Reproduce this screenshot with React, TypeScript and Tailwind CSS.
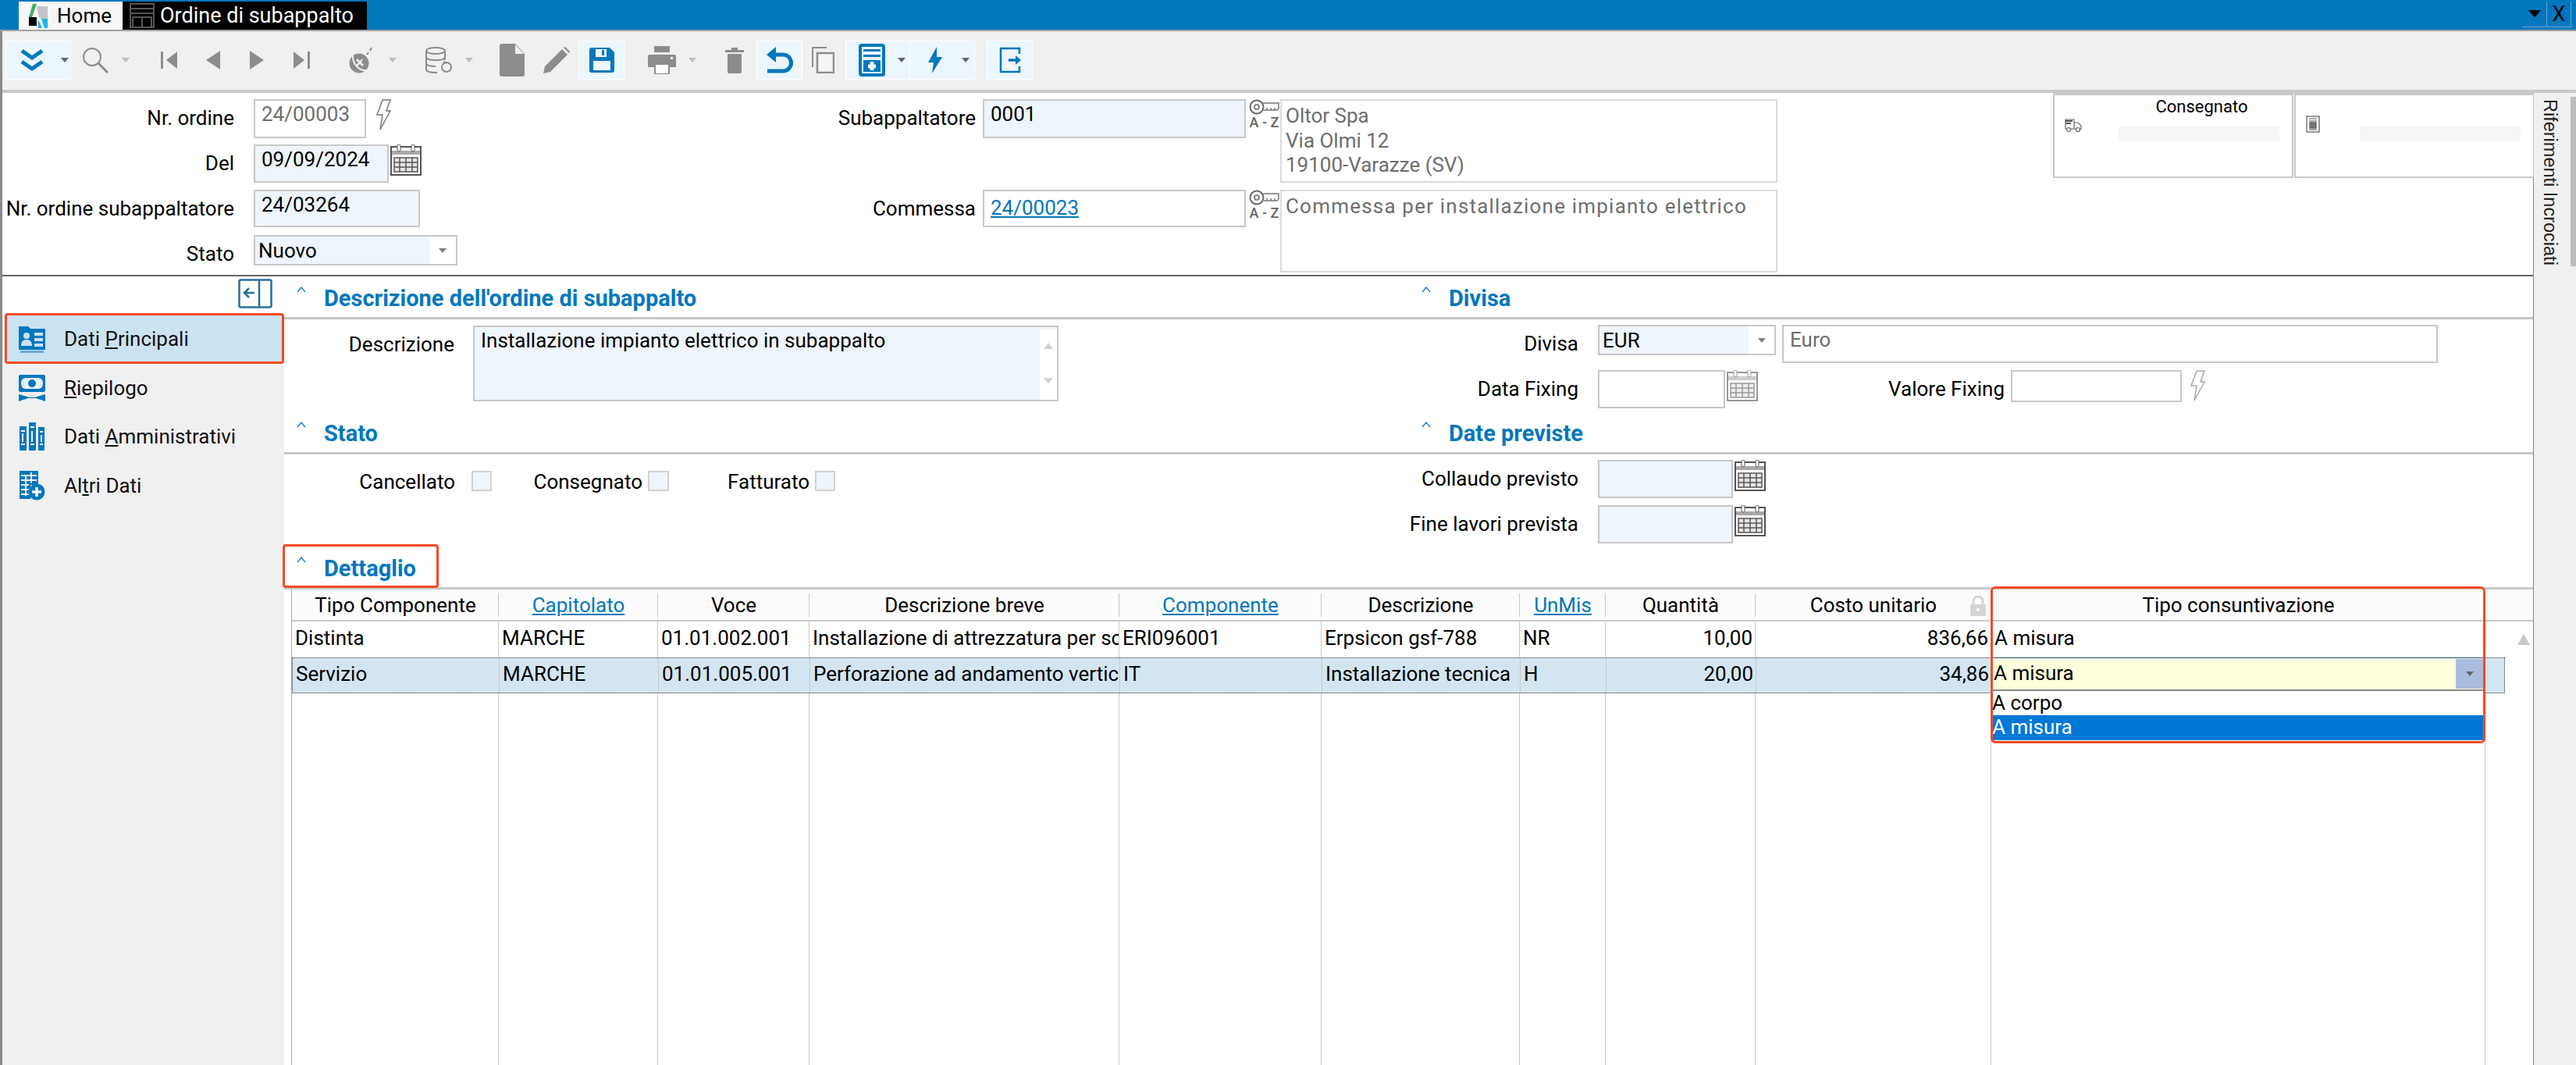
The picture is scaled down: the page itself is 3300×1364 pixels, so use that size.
import React from "react";

const BLUE = "#0277bd";
const GR = "#8c8c8c";

function Tri({ c = "#7f7f7f", s = 10 }: { c?: string; s?: number }) {
  return (
    <svg width={s} height={s * 0.6} viewBox="0 0 10 6" className="shrink-0">
      <path d="M0 0h10L5 6z" fill={c} />
    </svg>
  );
}

function Calendar({ faded = false }: { faded?: boolean }) {
  return (
    <svg width="40" height="40" viewBox="0 0 40 40" className={faded ? "shrink-0 opacity-60" : "shrink-0"}>
      <rect x="1" y="3" width="38" height="36" fill="#fff" stroke="#555" strokeWidth="2" />
      <rect x="2" y="8" width="36" height="5" fill="#a8a8a8" />
      <rect x="9" y="0" width="4" height="9" rx="2" fill="#fff" stroke="#555" />
      <rect x="27" y="0" width="4" height="9" rx="2" fill="#fff" stroke="#555" />
      <rect x="5" y="17" width="30" height="18" fill="#e4e4e4" stroke="#555" strokeWidth="1.5" />
      <path d="M12 17v18M20 17v18M28 17v18M5 23h30M5 29h30" stroke="#555" strokeWidth="1.5" />
    </svg>
  );
}

function KeyAZ() {
  return (
    <div className="w-[41px] shrink-0 flex flex-col items-center">
      <svg width="40" height="20" viewBox="0 0 40 20">
        <circle cx="10" cy="10" r="8.5" fill="none" stroke="#666" strokeWidth="2" />
        <circle cx="10" cy="10" r="3" fill="none" stroke="#666" strokeWidth="1.5" />
        <path d="M18 5h20v7l-2 2H19M23 14v-3M28 14v-3M33 14v-3" fill="none" stroke="#777" strokeWidth="1.5" />
      </svg>
      <div className="text-[18px] leading-[20px] font-medium text-[#666] whitespace-pre">A - Z</div>
    </div>
  );
}

function Bolt({ faded = false }: { faded?: boolean }) {
  return (
    <svg width="20" height="40" viewBox="0 0 20 40" className="shrink-0">
      <path d="M9 1h10l-5 14h5L6 39l3-19H2z" fill="#fff" stroke={faded ? "#aaa" : "#777"} strokeWidth="1.5" />
    </svg>
  );
}

function Chevron() {
  return (
    <svg width="12" height="8" viewBox="0 0 12 8" className="shrink-0 mb-[18px]">
      <path d="M1 7l5-6 5 6" fill="none" stroke={BLUE} strokeWidth="1.2" />
    </svg>
  );
}

function SectionHead({ title, left, h = "h-[55px]" }: { title: string; left: string; h?: string }) {
  return (
    <div className={`${h} shrink-0 flex items-center border-b-[3px] border-[#c8c8c8] ${left}`}>
      <Chevron />
      <span className="ml-[23px] pt-[4px] text-[29px] leading-[32px] font-bold text-[#0277bd]">{title}</span>
    </div>
  );
}

function Label({ w, children }: { w: string; children: React.ReactNode }) {
  return <div className={`${w} shrink-0 text-right pt-[10px] text-[26px] leading-[28px] text-black whitespace-nowrap`}>{children}</div>;
}

function Input({ w, h, fill = false, gray = false, link = false, children }: { w: string; h: string; fill?: boolean; gray?: boolean; link?: boolean; children?: React.ReactNode }) {
  return (
    <div
      className={`${w} ${h} shrink-0 border-2 border-[#c8c8c8] pl-[8px] text-[26px] leading-[28px] whitespace-nowrap ${link ? "pt-[7px]" : "pt-[3px]"} ${fill ? "bg-[#eef5fc]" : "bg-white"} ${gray ? "text-[#6e6e6e]" : link ? "text-[#0277bd] underline" : "text-black"}`}
    >
      {children}
    </div>
  );
}

function Select({ w, fillW, children }: { w: string; fillW: string; children: React.ReactNode }) {
  return (
    <div className={`${w} h-[39px] shrink-0 border-2 border-[#c8c8c8] bg-white flex items-center`}>
      <div className={`${fillW} h-full bg-[#eef5fc] pl-[4px] text-[26px] leading-[28px] flex items-center`}>{children}</div>
      <div className="flex-1 flex justify-center"><Tri /></div>
    </div>
  );
}

function Tool({ w, ml, active = false, children, cls = "justify-center" }: { w: string; ml: string; active?: boolean; children: React.ReactNode; cls?: string }) {
  return (
    <div className={`${w} ${ml} h-[48px] shrink-0 flex items-center ${cls} ${active ? "bg-[#ebf6fd] outline outline-1 outline-white" : ""}`}>
      {children}
    </div>
  );
}

function Toolbar() {
  return (
    <div className="h-[79px] shrink-0 bg-[#f0f0f0] border-b-[4px] border-[#c8c8c8] flex items-center pb-[1px]">
      <Tool w="w-[82px]" ml="ml-[5px]" active cls="pl-[17px] gap-[21px]">
        <svg width="32" height="30" viewBox="0 0 32 30"><path d="M3 3l13 9 13-9M3 17l13 9 13-9" fill="none" stroke={BLUE} strokeWidth="5" /></svg>
        <Tri c="#666" />
      </Tool>
      <Tool w="w-[72px]" ml="ml-[10px]" cls="pl-[5px] gap-[17px]">
        <svg width="34" height="34" viewBox="0 0 34 34"><circle cx="13" cy="13" r="11" fill="none" stroke={GR} strokeWidth="2" /><path d="M21 21l12 12" stroke={GR} strokeWidth="3" /></svg>
        <Tri c="#bdbdbd" />
      </Tool>
      <Tool w="w-[41px]" ml="ml-[23px]"><svg width="22" height="24" viewBox="0 0 22 24"><path d="M1 1h3v22H1zM22 1v22L8 12z" fill={GR} /></svg></Tool>
      <Tool w="w-[40px]" ml="ml-[17px]"><svg width="18" height="24" viewBox="0 0 18 24"><path d="M18 0v24L0 12z" fill={GR} /></svg></Tool>
      <Tool w="w-[40px]" ml="ml-[16px]"><svg width="18" height="24" viewBox="0 0 18 24"><path d="M0 0v24l18-12z" fill={GR} /></svg></Tool>
      <Tool w="w-[40px]" ml="ml-[18px]"><svg width="22" height="24" viewBox="0 0 22 24"><path d="M18 1h3v22h-3zM0 1v22l14-11z" fill={GR} /></svg></Tool>
      <Tool w="w-[75px]" ml="ml-[33px]" cls="pl-[7px] gap-[17px]">
        <svg width="34" height="34" viewBox="0 0 34 34"><circle cx="13" cy="21" r="12.500" fill={GR} /><path d="M5 10c-1 10 7 22 19 20" fill="none" stroke="#f0f0f0" strokeWidth="2" /><path d="M10 16l8 8M18 16l-8 8" stroke="#f0f0f0" strokeWidth="2.500" /><path d="M17 19l4-6M23 10l2-3M27 5l2-4" stroke={GR} strokeWidth="2" /></svg>
        <Tri c="#bdbdbd" />
      </Tool>
      <Tool w="w-[74px]" ml="ml-[23px]" cls="pl-[6px] gap-[16px]">
        <svg width="36" height="36" viewBox="0 0 36 36" fill="none" stroke={GR} strokeWidth="2"><ellipse cx="14" cy="6" rx="12" ry="4" /><path d="M2 6v24c0 3 6 4 14 4M26 6v12M2 14c0 3 6 4 12 4s12-1 12-4M2 22c0 3 6 4 12 4" /><circle cx="28" cy="27" r="6" /><path d="M24 20l4 2" /></svg>
        <Tri c="#bdbdbd" />
      </Tool>
      <Tool w="w-[42px]" ml="ml-[23px]"><svg width="32" height="42" viewBox="0 0 32 42"><path d="M3 0h17l12 13v26a3 3 0 0 1-3 3H3a3 3 0 0 1-3-3V3a3 3 0 0 1 3-3z" fill={GR} /><path d="M20 1v12h11" fill="#f0f0f0" /></svg></Tool>
      <Tool w="w-[42px]" ml="ml-[15px]"><svg width="34" height="34" viewBox="0 0 34 34"><path d="M0 34l2-9L24 3l7 7L9 32z" fill={GR} /><path d="M26 1l2-1 6 6-1 2z" fill={GR} /></svg></Tool>
      <Tool w="w-[57px]" ml="ml-[8px]" active>
        <svg width="32" height="32" viewBox="0 0 32 32"><path d="M3 0h23l6 6v23a3 3 0 0 1-3 3H3a3 3 0 0 1-3-3V3a3 3 0 0 1 3-3z" fill={BLUE} /><rect x="8" y="2" width="14" height="10" fill="#ebf6fd" /><rect x="16" y="3" width="3" height="7" fill={BLUE} /><rect x="5" y="17" width="22" height="12" fill="#ebf6fd" /></svg>
      </Tool>
      <Tool w="w-[73px]" ml="ml-[23px]" cls="pl-[8px] gap-[16px]">
        <svg width="36" height="36" viewBox="0 0 36 36"><rect x="8" y="0" width="20" height="8" fill={GR} /><path d="M2 11h32a2 2 0 0 1 2 2v14H28v-5H8v5H0V13a2 2 0 0 1 2-2z" fill={GR} /><rect x="9" y="23" width="18" height="13" fill="#fff" stroke={GR} strokeWidth="2" /><rect x="29" y="14" width="3" height="3" fill="#fff" /></svg>
        <Tri c="#bdbdbd" />
      </Tool>
      <Tool w="w-[41px]" ml="ml-[25px]"><svg width="24" height="34" viewBox="0 0 24 34"><path d="M0 4h24v3H0zM8 1h8v3H8z" fill={GR} /><path d="M3 9h18v23a2 2 0 0 1-2 2H5a2 2 0 0 1-2-2z" fill={GR} /></svg></Tool>
      <Tool w="w-[57px]" ml="ml-[9px]" active>
        <svg width="36" height="34" viewBox="0 0 36 34"><path d="M2 31h20a10.500 10.500 0 0 0 0-21H5" fill="none" stroke={BLUE} strokeWidth="5" /><path d="M13 0v20L1 10z" fill={BLUE} /></svg>
      </Tool>
      <Tool w="w-[42px]" ml="ml-[6px]"><svg width="30" height="34" viewBox="0 0 30 34" fill="none" stroke={GR} strokeWidth="2"><path d="M20 1H2v25" /><rect x="8" y="8" width="21" height="25" fill="#f5f5f5" strokeWidth="2.500" /></svg></Tool>
      <Tool w="w-[81px]" ml="ml-[9px]" active cls="pl-[16px] gap-[16px]">
        <svg width="34" height="42" viewBox="0 0 34 42"><rect width="34" height="42" rx="4" fill={BLUE} /><rect x="4" y="4" width="26" height="34" fill="#ebf6fd" /><rect x="6" y="7" width="22" height="3" fill={BLUE} /><rect x="6" y="14" width="22" height="3" fill={BLUE} /><rect x="6" y="21" width="22" height="15" fill={BLUE} /><path d="M17 23v11M12 29h10" stroke="#ebf6fd" strokeWidth="5" /></svg>
        <Tri c="#666" />
      </Tool>
      <Tool w="w-[82px]" ml="ml-[1px]" active cls="pl-[22px] gap-[24px]">
        <svg width="20" height="34" viewBox="0 0 20 34"><path d="M12 0L1 20h7l-2 14 13-21h-7z" fill={BLUE} /></svg>
        <Tri c="#666" />
      </Tool>
      <Tool w="w-[57px]" ml="ml-[17px]" active>
        <svg width="28" height="34" viewBox="0 0 28 34" fill="none" stroke={BLUE} strokeWidth="2.500"><path d="M26 9V2H2v30h24v-7" /><path d="M12 17h13" strokeWidth="3.500" /><path d="M21 11v12l7-6z" fill={BLUE} stroke="none" /></svg>
      </Tool>
    </div>
  );
}

function TitleBar() {
  return (
    <div className="h-[38px] shrink-0 bg-[#0277bd] flex items-end">
      <div className="ml-[24px] w-[133px] h-[36px] bg-[#f7f7f7] flex items-center pl-[13px] gap-[12px]">
        <svg width="24" height="31" viewBox="0 0 24 31">
          <path d="M0 17L5 0h5L4 17z" fill="#3fae63" />
          <path d="M10 3h14v16H14l-3-9z" fill="#c4c4c4" />
          <rect x="0" y="17" width="10" height="11" fill="#000" />
          <path d="M12 20l5 11h-5zM16 19h8v12h-4z" fill="#1fb3ea" />
        </svg>
        <span className="text-[26px] leading-[30px] text-black">Home</span>
      </div>
      <div className="w-[313px] h-[36px] bg-black flex items-center pl-[9px] gap-[7px]">
        <svg width="32" height="32" viewBox="0 0 32 32" fill="none" stroke="#555" strokeWidth="2"><rect x="1" y="1" width="30" height="30" /><path d="M1 7h30M1 13h30M4 18h24v13M4 18v13M16 18v13" /></svg>
        <span className="text-[27px] leading-[30px] text-white whitespace-nowrap">Ordine di subappalto</span>
      </div>
      <div className="flex-1" />
      <div className="h-[33px] mb-[3px] mr-[6px] flex border-b border-[#5fa8d6]">
        <div className="w-[32px] flex items-center justify-center border-r border-[#5fa8d6]"><Tri c="#000" s={16} /></div>
        <div className="w-[31px] flex items-center justify-center text-[27px] leading-none text-black border-r border-[#5fa8d6]">X</div>
      </div>
    </div>
  );
}

function Card({ label, ml, icon }: { label?: string; ml: string; icon: React.ReactNode }) {
  return (
    <div className={`w-[308px] h-[109px] ${ml} shrink-0 border-2 border-[#c8c8c8] border-t-[3px] flex flex-col`}>
      <div className="h-[32px] pl-[73px] pb-[2px] flex items-center justify-center text-[22px] leading-[24px] text-black">{label}</div>
      <div className="flex items-start">
        <div className="w-[82px] pl-[13px] -mt-[2px] h-[30px]">{icon}</div>
        <div className="w-[206px] h-[19px] mt-[8px] bg-[#f6f6f6]" />
      </div>
    </div>
  );
}

function Header() {
  return (
    <div className="h-[235px] shrink-0 border-b-2 border-[#666] flex">
      <div className="w-[1000px] shrink-0 flex flex-col pt-[8px]">
        <div className="flex h-[58px] items-start">
          <Label w="w-[297px]">Nr. ordine</Label>
          <div className="ml-[25px]"><Input w="w-[144px]" h="h-[50px]" gray>24/00003</Input></div>
          <div className="ml-[12px]"><Bolt /></div>
        </div>
        <div className="flex h-[58px] items-start">
          <Label w="w-[297px]">Del</Label>
          <div className="ml-[25px]"><Input w="w-[173px]" h="h-[49px]" fill>09/09/2024</Input></div>
          <div className="ml-[2px]"><Calendar /></div>
        </div>
        <div className="flex h-[58px] items-start">
          <Label w="w-[297px]">Nr. ordine subappaltatore</Label>
          <div className="ml-[25px]"><Input w="w-[213px]" h="h-[48px]" fill>24/03264</Input></div>
        </div>
        <div className="flex items-start">
          <Label w="w-[297px]">Stato</Label>
          <div className="ml-[25px]"><Select w="w-[261px]" fillW="w-[223px]">Nuovo</Select></div>
        </div>
      </div>
      <div className="w-[1275px] shrink-0 flex flex-col pt-[8px]">
        <div className="flex h-[116px] items-start">
          <Label w="w-[247px]">Subappaltatore</Label>
          <div className="ml-[9px]"><Input w="w-[337px]" h="h-[50px]" fill>0001</Input></div>
          <div className="ml-[3px]"><KeyAZ /></div>
          <div className="w-[637px] h-[107px] border-2 border-[#dcdcdc] pl-[5px] pt-[4px] text-[26px] leading-[31.500px] text-[#6e6e6e]">
            <div>Oltor Spa</div>
            <div>Via Olmi 12</div>
            <div>19100-Varazze (SV)</div>
          </div>
        </div>
        <div className="flex items-start">
          <Label w="w-[247px]">Commessa</Label>
          <div className="ml-[9px]"><Input w="w-[337px]" h="h-[48px]" link>24/00023</Input></div>
          <div className="ml-[3px]"><KeyAZ /></div>
          <div className="w-[637px] h-[106px] border-2 border-[#dcdcdc] pl-[5px] pt-[4px] text-[26px] leading-[31.500px] tracking-[1.2px] text-[#6e6e6e]">Commessa per installazione impianto elettrico</div>
        </div>
      </div>
      <Card ml="ml-[352px]" label="Consegnato" icon={
        <svg width="22" height="18" viewBox="0 0 22 18" fill="none" stroke="#666" strokeWidth="1.2"><path d="M1 1h11v12H1zM12 5h5l4 4v4h-9" fill="#fff" /><path d="M1 3h9M1 6h7" stroke="#555" strokeWidth="2" /><circle cx="5" cy="14" r="2.500" fill="#fff" /><circle cx="17" cy="14" r="2.500" fill="#fff" /></svg>
      } />
      <Card ml="ml-[1px]" icon={
        <svg width="18" height="22" viewBox="0 0 18 22" fill="none" stroke="#555" strokeWidth="1.2" className="-mt-[4px]"><rect x="1" y="1" width="16" height="20" fill="#fff" /><path d="M4 4h10M4 7h10M4 18h10" /><rect x="5" y="9" width="8" height="7" fill="#777" /></svg>
      } />
    </div>
  );
}

const items = [
  { key: "a", active: true, text: <>Dati <u>P</u>rincipali</>, h: "h-[65px]", icon: (
    <svg width="34" height="36" viewBox="0 0 34 36"><path d="M0 2h12l3 3h19v27H0z" fill={BLUE} /><circle cx="10" cy="14" r="4" fill="#cbe2f0" /><path d="M3 27c0-6 3-8 7-8s7 2 7 8z" fill="#cbe2f0" /><path d="M20 10h11v4H20zM20 17h11v4H20zM20 24h11v4H20z" fill="#cbe2f0" /><rect x="2" y="33" width="30" height="3" fill={BLUE} opacity="0.5" /></svg>
  ) },
  { key: "b", text: <><u>R</u>iepilogo</>, h: "h-[62px]", icon: (
    <svg width="34" height="36" viewBox="0 0 34 36"><rect x="0" y="1" width="34" height="22" rx="2" fill={BLUE} /><rect x="3" y="5" width="28" height="14" rx="6" fill="#e8f2f8" /><circle cx="17" cy="12" r="5" fill={BLUE} /><path d="M0 26l14 4h6l14-4v9l-12-4H12L0 35z" fill={BLUE} /></svg>
  ) },
  { key: "c", text: <>Dati <u>A</u>mministrativi</>, h: "h-[62px]", icon: (
    <svg width="34" height="36" viewBox="0 0 34 36"><path d="M1 5h9v31H1zM13 0h9v36h-9zM25 6h8v30h-8z" fill={BLUE} /><path d="M3 11h5M3 28h5M15 6h5M15 28h5M27 12h4M27 28h4" stroke="#f0f0f0" strokeWidth="2" /><path d="M5 14v11M17 11v14M29 16v9" stroke="#f0f0f0" strokeWidth="2" /></svg>
  ) },
  { key: "d", text: <>Al<u>t</u>ri Dati</>, h: "h-[63px]", icon: (
    <svg width="34" height="38" viewBox="0 0 34 38"><path d="M1 0h24v18H15v18H1z" fill={BLUE} /><path d="M3 6h20M3 12h20M3 18h10M3 24h10M3 30h10M9 6v26M16 2v14" stroke="#f0f0f0" strokeWidth="2" /><circle cx="23" cy="27" r="10.500" fill={BLUE} /><path d="M23 21v12M17 27h12" stroke="#f0f0f0" strokeWidth="3.500" /></svg>
  ) },
];

function Sidebar() {
  return (
    <div className="w-[361px] shrink-0 flex flex-col">
      <div className="h-[47px] shrink-0 flex justify-end pr-[15px] pt-[3px]">
        <svg width="44" height="38" viewBox="0 0 44 38" fill="none" stroke="#2a6f9e" strokeWidth="2.500"><rect x="1.500" y="1.500" width="41" height="35" rx="2" /><path d="M27 2v34" /><path d="M8 18h13M14 12l-6 6 6 6" /></svg>
      </div>
      <div className="flex-1 bg-[#f0f0f0] flex flex-col">
        {items.map((it) => (
          <div
            key={it.key}
            className={`${it.h} shrink-0 flex items-center text-[26px] leading-[28px] text-[#111] ${it.active ? "ml-[3px] pl-[15px] bg-[#cbe2f0] border-[3px] border-[#f44a25] rounded-[4px]" : "pl-[21px]"}`}
          >
            <div className="w-[34px] mr-[24px] shrink-0 flex justify-center">{it.icon}</div>
            <span>{it.text}</span>
          </div>
        ))}
      </div>
    </div>
  );
}

const cols = "grid-cols-[265px_204px_194px_397px_259px_254px_110px_192px_302px_633px_61px]";

function HeaderCell({ link, children }: { link?: boolean; children?: React.ReactNode }) {
  return (
    <div className="relative h-full flex items-center justify-center text-[26px] leading-[28px] whitespace-nowrap">
      <span className={link ? "text-[#0277bd] underline" : "text-black"}>{children}</span>
    </div>
  );
}

function Cell({ right, last, children }: { right?: boolean; last?: boolean; children?: React.ReactNode }) {
  return (
    <div className={`h-full overflow-hidden whitespace-nowrap flex items-center pb-[4px] text-[26px] leading-[28px] text-black ${last ? "" : "border-r border-[#c8c8c8]"} ${right ? "justify-end pr-[3px]" : "pl-[4px]"}`}>
      {children}
    </div>
  );
}

function Table() {
  const headers: [string, boolean][] = [
    ["Tipo Componente", false], ["Capitolato", true], ["Voce", false], ["Descrizione breve", false], ["Componente", true],
    ["Descrizione", false], ["UnMis", true], ["Quantità", false], ["Costo unitario", false], ["Tipo consuntivazione", false],
  ];
  return (
    <div className="flex-1 ml-[9px] border-l border-[#aaa] flex flex-col relative min-h-0">
      <div className={`grid ${cols} h-[41px] shrink-0 bg-[#fcfcfc] border-b-2 border-[#c8c8c8]`}>
        {headers.map(([h, l], i) => (
          <div key={h} className="relative h-full">
            <HeaderCell link={l}>{h}</HeaderCell>
            <div className="absolute right-0 top-[5px] bottom-[4px] w-px bg-[#c8c8c8]" />
            {i === 8 && (
              <svg width="22" height="26" viewBox="0 0 22 26" className="absolute right-[6px] top-[8px]"><path d="M5 11V7a6 6 0 0 1 12 0v4" fill="none" stroke="#d4d4d4" strokeWidth="3" /><rect x="1" y="11" width="20" height="15" rx="1" fill="#d4d4d4" /><circle cx="11" cy="18" r="2" fill="#fff" /></svg>
            )}
          </div>
        ))}
      </div>
      <div className={`grid ${cols} h-[46px] shrink-0`}>
        <Cell>Distinta</Cell>
        <Cell>MARCHE</Cell>
        <Cell>01.01.002.001</Cell>
        <Cell>Installazione di attrezzatura per sc</Cell>
        <Cell>ERI096001</Cell>
        <Cell>Erpsicon gsf-788</Cell>
        <Cell>NR</Cell>
        <Cell right>10,00</Cell>
        <Cell right>836,66</Cell>
        <Cell>A misura</Cell>
        <div className="h-full flex justify-end items-center pr-[4px] pb-[1px]">
          <svg width="16" height="14" viewBox="0 0 16 14"><path d="M8 0l8 14H0z" fill="#c8c8c8" /></svg>
        </div>
      </div>
      <div className={`grid ${cols} h-[46px] shrink-0 relative`}>
        <div className="col-span-9 grid grid-cols-[265px_204px_194px_397px_259px_254px_110px_192px_302px] h-full bg-[#d4e5f2] border-y border-dotted border-[#333] border-l">
          <Cell>Servizio</Cell>
          <Cell>MARCHE</Cell>
          <Cell>01.01.005.001</Cell>
          <Cell>Perforazione ad andamento vertic</Cell>
          <Cell>IT</Cell>
          <Cell>Installazione tecnica</Cell>
          <Cell>H</Cell>
          <Cell right>20,00</Cell>
          <Cell right>34,86</Cell>
        </div>
        <div className="relative h-full bg-[#ffffdc] border-y border-[#1d4f8f] flex items-center pl-[3px] pb-[7px] text-[26px] leading-[28px]">
          A misura
          <div className="absolute right-[3px] top-[1px] bottom-[5px] w-[35px] bg-[#aabcdd] flex items-center justify-center"><Tri c="#666" /></div>
          <div className="absolute left-0 right-0 top-[40px] h-[66px] bg-white border-t-2 border-[#888] text-[26px] leading-[28px] z-10">
            <div className="h-[31px] pl-[1px] pb-[2px] flex items-center text-black">A corpo</div>
            <div className="h-[32px] pl-[1px] pb-[2px] flex items-center bg-[#0078d7] text-white">A misura</div>
          </div>
        </div>
        <div className="w-[25px] h-full bg-[#d4e5f2] border-y border-r border-dotted border-[#333]" />
      </div>
      <div className={`grid ${cols} flex-1`}>
        {Array.from({ length: 10 }).map((_, i) => (
          <div key={i} className="h-full border-r border-[#c8c8c8]" />
        ))}
      </div>
      <div className="absolute left-[2176px] top-[-4px] w-[634px] h-[201px] border-[3px] border-[#f44a25] rounded-[6px] z-20 pointer-events-none" />
    </div>
  );
}

function Content() {
  return (
    <div className="flex-1 flex flex-col min-w-0 relative">
      <div className="grid grid-cols-[1400px_1fr] shrink-0">
        <div className="flex flex-col">
          <SectionHead title="Descrizione dell'ordine di subappalto" left="pl-[16px]" />
          <div className="h-[118px] flex items-start pt-[8px]">
            <Label w="w-[218px]">Descrizione</Label>
            <div className="ml-[24px] w-[750px] h-[97px] border-2 border-[#c8c8c8] bg-[#eef5fc] flex justify-between pl-[8px] pt-[3px] text-[26px] leading-[28px]">
              <span>Installazione impianto elettrico in subappalto</span>
              <div className="w-[22px] bg-white flex flex-col items-center pt-[17px] gap-[37px]">
                <svg width="12" height="8" viewBox="0 0 12 8"><path d="M6 0l6 8H0z" fill="#d2d2d2" /></svg>
                <Tri c="#d2d2d2" s={12} />
              </div>
            </div>
          </div>
          <SectionHead title="Stato" left="pl-[16px]" />
          <div className="h-[117px] flex items-start pt-[11px]">
            <Label w="w-[219px]">Cancellato</Label>
            <div className="ml-[21px] mt-[10px] w-[26px] h-[26px] border-2 border-[#d0d0d0] bg-[#eef5fc]" />
            <Label w="w-[193px]">Consegnato</Label>
            <div className="ml-[7px] mt-[10px] w-[27px] h-[26px] border-2 border-[#d0d0d0] bg-[#eef5fc]" />
            <Label w="w-[180px]">Fatturato</Label>
            <div className="ml-[7px] mt-[10px] w-[26px] h-[26px] border-2 border-[#d0d0d0] bg-[#eef5fc]" />
          </div>
        </div>
        <div className="flex flex-col">
          <SectionHead title="Divisa" left="pl-[57px]" />
          <div className="h-[118px] flex flex-col pt-[7px]">
            <div className="flex items-start h-[58px]">
              <Label w="w-[258px]">Divisa</Label>
              <div className="ml-[25px]"><Select w="w-[228px]" fillW="w-[191px]">EUR</Select></div>
              <div className="ml-[8px]"><Input w="w-[840px]" h="h-[49px]" gray>Euro</Input></div>
            </div>
            <div className="flex items-start">
              <Label w="w-[258px]">Data Fixing</Label>
              <div className="ml-[25px]"><Input w="w-[163px]" h="h-[49px]" /></div>
              <div className="ml-[2px]"><Calendar faded /></div>
              <Label w="w-[316px]">Valore Fixing</Label>
              <div className="ml-[8px]"><Input w="w-[219px]" h="h-[41px]" /></div>
              <div className="ml-[10px]"><Bolt faded /></div>
            </div>
          </div>
          <SectionHead title="Date previste" left="pl-[57px]" />
          <div className="h-[117px] flex flex-col pt-[7px]">
            <div className="flex items-start h-[58px]">
              <Label w="w-[258px]">Collaudo previsto</Label>
              <div className="ml-[25px]"><Input w="w-[173px]" h="h-[49px]" fill /></div>
              <div className="ml-[2px]"><Calendar /></div>
            </div>
            <div className="flex items-start">
              <Label w="w-[258px]">Fine lavori prevista</Label>
              <div className="ml-[25px]"><Input w="w-[173px]" h="h-[49px]" fill /></div>
              <div className="ml-[2px]"><Calendar /></div>
            </div>
          </div>
        </div>
      </div>
      <div className="relative">
        <SectionHead title="Dettaglio" left="pl-[16px]" h="h-[56px]" />
        <div className="absolute left-[-2px] top-[-2px] w-[200px] h-[56px] border-[3px] border-[#f44a25] rounded-[4px] pointer-events-none" />
      </div>
      <Table />
    </div>
  );
}

export default function App() {
  return (
    <div className="w-[3300px] h-[1364px] overflow-hidden flex flex-col bg-white text-black font-['Roboto',sans-serif]">
      <TitleBar />
      <div className="h-[2px] shrink-0 bg-[#a0a0a0]" />
      <div className="flex-1 flex flex-col min-h-0 border-l-[3px] border-[#8a8a8a]">
        <Toolbar />
        <div className="flex-1 flex min-h-0">
          <div className="w-[3243px] shrink-0 flex flex-col border-r border-[#888]">
            <Header />
            <div className="flex-1 flex min-h-0">
              <Sidebar />
              <Content />
            </div>
          </div>
          <div className="flex-1 bg-[#f0f0f0] flex justify-between items-start">
            <div className="pl-[9px] pt-[8px] text-[23.500px] leading-[24px] font-['Liberation_Sans',sans-serif] text-[#222] [writing-mode:vertical-rl] whitespace-nowrap">Riferimenti Incrociati</div>
            <div className="w-[7px] h-[217px] mt-[5px] bg-[#bdbdbd]" />
          </div>
        </div>
      </div>
    </div>
  );
}
